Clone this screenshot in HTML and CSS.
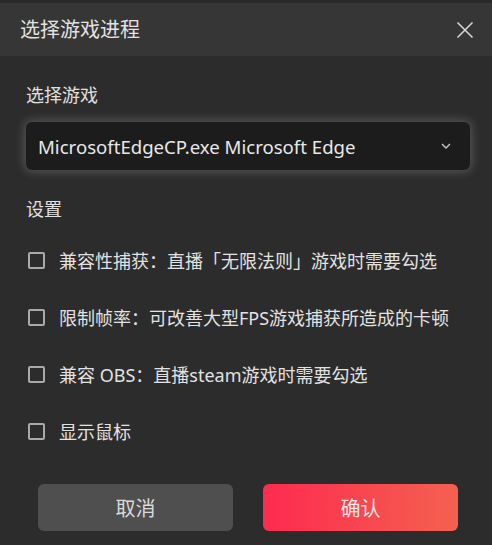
FILE: index.html
```html
<!DOCTYPE html>
<html lang="zh-CN">
<head>
<meta charset="utf-8">
<title>选择游戏进程</title>
<link rel="stylesheet" href="styles.css">
</head>
<body>
<div class="dialog">
  <div class="header">
    <span class="title">选择游戏进程</span>
    <svg class="close" width="18" height="18" viewBox="0 0 18 18"><path d="M1.5 1.5 L16.5 16.5 M16.5 1.5 L1.5 16.5" stroke="#d8d8d8" stroke-width="1.5" fill="none"/></svg>
  </div>
  <div class="body">
    <div class="label">选择游戏</div>
    <div class="select">
      <span class="select-text">MicrosoftEdgeCP.exe Microsoft Edge</span>
      <svg class="chevron" width="10" height="6" viewBox="0 0 10 6"><path d="M1 1 L5 5 L9 1" stroke="#c8c8c8" stroke-width="1.4" fill="none"/></svg>
    </div>
    <div class="label section">设置</div>
    <div class="options">
      <label class="option"><span class="box"></span><span>兼容性捕获：直播「无限法则」游戏时需要勾选</span></label>
      <label class="option"><span class="box"></span><span>限制帧率：可改善大型FPS游戏捕获所造成的卡顿</span></label>
      <label class="option"><span class="box"></span><span>兼容 OBS：直播steam游戏时需要勾选</span></label>
      <label class="option"><span class="box"></span><span>显示鼠标</span></label>
    </div>
    <div class="buttons">
      <button class="btn cancel">取消</button>
      <button class="btn confirm">确认</button>
    </div>
  </div>
</div>
</body>
</html>
```

FILE: styles.css
```css
html, body {
  margin: 0;
  padding: 0;
  background: #2c2c2c;
}
body {
  font-family: "Noto Sans", "Noto Sans CJK SC", sans-serif;
  color: #e4e4e4;
  width: 492px;
  height: 545px;
  overflow: hidden;
}
.dialog {
  display: flex;
  flex-direction: column;
  height: 545px;
  background: #2c2c2c;
  border-top: 3px solid #2a2a2a;
  box-sizing: border-box;
}
.header {
  height: 53px;
  background: #363636;
  display: flex;
  align-items: center;
  justify-content: space-between;
  padding: 0 18px 0 20px;
}
.title {
  font-size: 20px;
  line-height: 26px;
  color: #e2e2e2;
}
.close {
  display: block;
}
.body {
  padding: 0 22px 0 26px;
  display: flex;
  flex-direction: column;
}
.label {
  font-size: 18px;
  line-height: 24px;
  margin-top: 27px;
  color: #e0e0e0;
}
.select {
  margin-top: 15px;
  height: 48px;
  background: #1c1c1c;
  border-radius: 6px;
  box-shadow: 0 0 10px 2px rgba(190, 190, 190, 0.28);
  display: flex;
  align-items: center;
  justify-content: space-between;
  padding: 0 19px 0 12px;
}
.select-text {
  font-size: 18.6px;
  color: #e8e8e8;
}
.chevron {
  display: block;
}
.section {
  margin-top: 27px;
}
.options {
  margin-top: 27px;
  display: flex;
  flex-direction: column;
  gap: 33px;
}
.option {
  display: flex;
  align-items: center;
  height: 24px;
  font-size: 18px;
  color: #e2e2e2;
  padding-left: 2px;
}
.box {
  width: 13px;
  height: 13px;
  border: 2px solid #a9a9a9;
  border-radius: 2px;
  margin-right: 14px;
  flex: none;
}
.buttons {
  margin-top: 41px;
  padding-left: 12px;
  display: flex;
  gap: 30px;
}
.btn {
  width: 195px;
  height: 47px;
  border: none;
  border-radius: 6px;
  font-family: "Noto Sans CJK SC", sans-serif;
  font-size: 20px;
}
.cancel {
  background: #4f4f4f;
  color: #dadada;
}
.confirm {
  background: linear-gradient(90deg, #fe2a4f, #f4614f);
  color: #fde6e8;
}
```
